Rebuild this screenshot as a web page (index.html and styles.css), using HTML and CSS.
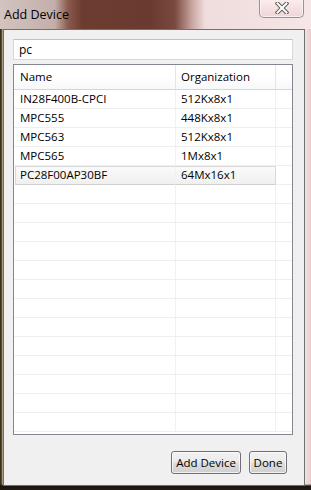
FILE: index.html
```html
<!DOCTYPE html>
<html>
<head>
<meta charset="utf-8">
<link rel="stylesheet" href="styles.css">
</head>
<body>
<div class="window">
  <div class="titlebar">
    <span class="title">Add Device</span>
    <div class="close">
      <svg width="14" height="12" viewBox="0 0 14 12">
        <path d="M2.5 1.5 L11.5 10.5 M11.5 1.5 L2.5 10.5" stroke="#5b5b5b" stroke-width="4" stroke-linecap="square" fill="none"/>
        <path d="M2.5 1.5 L11.5 10.5 M11.5 1.5 L2.5 10.5" stroke="#ffffff" stroke-width="2" stroke-linecap="square" fill="none"/>
      </svg>
    </div>
  </div>
  <div class="client">
    <div class="search">pc</div>
    <div class="list">
      <div class="row head">
        <div class="cell">Name</div>
        <div class="cell">Organization</div>
        <div class="cell"></div>
      </div>
      <div class="row"><div class="cell">IN28F400B-CPCI</div><div class="cell">512Kx8x1</div><div class="cell"></div></div>
      <div class="row"><div class="cell">MPC555</div><div class="cell">448Kx8x1</div><div class="cell"></div></div>
      <div class="row"><div class="cell">MPC563</div><div class="cell">512Kx8x1</div><div class="cell"></div></div>
      <div class="row"><div class="cell">MPC565</div><div class="cell">1Mx8x1</div><div class="cell"></div></div>
      <div class="row sel"><div class="cell">PC28F00AP30BF</div><div class="cell">64Mx16x1</div><div class="cell"></div></div>
      <div class="row"><div class="cell"></div><div class="cell"></div><div class="cell"></div></div>
      <div class="row"><div class="cell"></div><div class="cell"></div><div class="cell"></div></div>
      <div class="row"><div class="cell"></div><div class="cell"></div><div class="cell"></div></div>
      <div class="row"><div class="cell"></div><div class="cell"></div><div class="cell"></div></div>
      <div class="row"><div class="cell"></div><div class="cell"></div><div class="cell"></div></div>
      <div class="row"><div class="cell"></div><div class="cell"></div><div class="cell"></div></div>
      <div class="row"><div class="cell"></div><div class="cell"></div><div class="cell"></div></div>
      <div class="row"><div class="cell"></div><div class="cell"></div><div class="cell"></div></div>
      <div class="row"><div class="cell"></div><div class="cell"></div><div class="cell"></div></div>
      <div class="row"><div class="cell"></div><div class="cell"></div><div class="cell"></div></div>
      <div class="row"><div class="cell"></div><div class="cell"></div><div class="cell"></div></div>
      <div class="row"><div class="cell"></div><div class="cell"></div><div class="cell"></div></div>
      <div class="row"><div class="cell"></div><div class="cell"></div><div class="cell"></div></div>
    </div>
    <div class="buttons">
      <div class="btn add">Add Device</div>
      <div class="btn done">Done</div>
    </div>
  </div>
</div>
</body>
</html>
```
FILE: styles.css
```css
html, body {
  margin: 0;
  padding: 0;
}
body {
  width: 311px;
  height: 490px;
  overflow: hidden;
  font-family: "Open Sans", "Noto Sans", sans-serif;
  font-size: 11.5px;
  color: #000;
}
.window {
  width: 311px;
  height: 490px;
  display: flex;
  flex-direction: column;
  background:
    linear-gradient(to bottom, rgba(0,0,0,0) 0, rgba(0,0,0,0) 484px, #1a140e 486px, #231a12 490px),
    linear-gradient(to right, #2a2416 0, #6b5a2c 2px, #e9d4d2 3px, #f4dede 300px, #f6e0e0 305px, #e8cccc 311px);
}
.titlebar {
  height: 29px;
  flex: none;
  display: flex;
  align-items: flex-start;
  justify-content: space-between;
  background: linear-gradient(to right, #d2c4c0 0, #c4aea9 55px, #8a5a4e 68px, #6d3c31 82px, #6a3a30 150px, #7a4a40 175px, #c9a5a0 192px, #efdcdc 205px, #f7e6e7 311px);
}
.title {
  margin: 6px 0 0 4px;
  font-size: 12.5px;
  line-height: 17px;
  color: #000;
  font-weight: 500;
}
.close {
  margin: -1px 7px 0 0;
  width: 45px;
  height: 19px;
  box-sizing: border-box;
  border: 1px solid #a88a8a;
  border-top: none;
  border-radius: 0 0 5px 5px;
  background: linear-gradient(to bottom, #fbeeee 0, #f5e1e2 50%, #efd5d6 100%);
  box-shadow: inset 0 0 0 1px rgba(255,255,255,0.6);
  display: flex;
  align-items: center;
  justify-content: center;
}
.client {
  flex: 1;
  margin: 0 6px 4px 3px;
  border: 1px solid #707070;
  background: #f0f0f0;
  padding: 9px 11px 11px 9px;
  display: flex;
  flex-direction: column;
}
.search {
  height: 21px;
  box-sizing: border-box;
  border: 1px solid #d9d9d9;
  border-top-color: #c2c2c2;
  background: #fff;
  padding: 0 5px;
  line-height: 19px;
  font-size: 12px;
}
.list {
  margin-top: 4px;
  height: 371px;
  box-sizing: border-box;
  border: 1px solid #828790;
  background: #fff;
  overflow: hidden;
}
.row {
  display: grid;
  grid-template-columns: 162px 100px 1fr;
  height: 19px;
}
.row .cell {
  box-sizing: border-box;
  border-right: 1px solid #f0f0f5;
  border-bottom: 1px solid #efefef;
  padding-left: 6px;
  line-height: 18px;
  white-space: nowrap;
  overflow: hidden;
}
.row .cell:nth-child(2) {
  padding-left: 5px;
}
.row .cell:last-child {
  border-right: none;
}
.row.head {
  height: 25px;
}
.row.head .cell {
  line-height: 24px;
  border-right: 1px solid #e3e5e8;
  border-bottom: 1px solid #d5d5d5;
  background: linear-gradient(to bottom, #ffffff 0, #ffffff 50%, #f7f8fa 100%);
}
.row.head .cell:nth-child(2) {
  padding-left: 5px;
}
.row.head .cell:last-child {
  border-right: none;
}
.row.sel .cell:nth-child(-n+2) {
  background: linear-gradient(to bottom, #fafafa 0, #f0f0f0 100%);
  border-top: 1px solid #d9d9d9;
  border-bottom: 1px solid #d0d0d0;
  line-height: 16px;
}
.row.sel .cell:nth-child(1) {
  border-left: 1px solid #d9d9d9;
  margin-left: 1px;
  padding-left: 4px;
}
.row.sel .cell:nth-child(2) {
  border-right: 1px solid #d9d9d9;
}
.buttons {
  margin-top: auto;
  display: flex;
  justify-content: flex-end;
  gap: 8px;
  padding-right: 6px;
}
.btn {
  height: 23px;
  box-sizing: border-box;
  border: 1px solid #707070;
  border-radius: 3px;
  background: linear-gradient(to bottom, #f2f2f2 0, #ebebeb 45%, #dddddd 55%, #cfcfcf 100%);
  box-shadow: inset 0 0 0 1px rgba(255,255,255,0.7);
  font-size: 11.5px;
  line-height: 21px;
  padding: 0;
  white-space: nowrap;
  text-align: center;
}
.btn.add {
  width: 70px;
}
.btn.done {
  width: 38px;
}
```
